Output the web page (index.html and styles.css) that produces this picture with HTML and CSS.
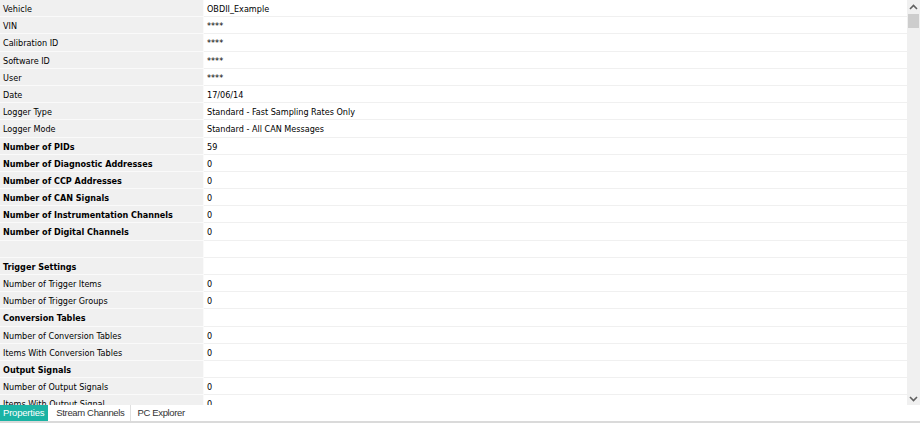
FILE: index.html
```html
<!DOCTYPE html>
<html>
<head>
<meta charset="utf-8">
<link rel="stylesheet" href="styles.css">
</head>
<body>
<div class="app">
  <div class="pane">
    <div class="grid">
      <div class="row"><div class="key">Vehicle</div><div class="val">OBDII_Example</div></div>
      <div class="row"><div class="key">VIN</div><div class="val">****</div></div>
      <div class="row"><div class="key">Calibration ID</div><div class="val">****</div></div>
      <div class="row"><div class="key">Software ID</div><div class="val">****</div></div>
      <div class="row"><div class="key">User</div><div class="val">****</div></div>
      <div class="row"><div class="key">Date</div><div class="val">17/06/14</div></div>
      <div class="row"><div class="key">Logger Type</div><div class="val">Standard - Fast Sampling Rates Only</div></div>
      <div class="row"><div class="key">Logger Mode</div><div class="val">Standard - All CAN Messages</div></div>
      <div class="row"><div class="key b">Number of PIDs</div><div class="val">59</div></div>
      <div class="row"><div class="key b">Number of Diagnostic Addresses</div><div class="val">0</div></div>
      <div class="row"><div class="key b">Number of CCP Addresses</div><div class="val">0</div></div>
      <div class="row"><div class="key b">Number of CAN Signals</div><div class="val">0</div></div>
      <div class="row"><div class="key b">Number of Instrumentation Channels</div><div class="val">0</div></div>
      <div class="row"><div class="key b">Number of Digital Channels</div><div class="val">0</div></div>
      <div class="row"><div class="key"></div><div class="val"></div></div>
      <div class="row"><div class="key b">Trigger Settings</div><div class="val"></div></div>
      <div class="row"><div class="key">Number of Trigger Items</div><div class="val">0</div></div>
      <div class="row"><div class="key">Number of Trigger Groups</div><div class="val">0</div></div>
      <div class="row"><div class="key b">Conversion Tables</div><div class="val"></div></div>
      <div class="row"><div class="key">Number of Conversion Tables</div><div class="val">0</div></div>
      <div class="row"><div class="key">Items With Conversion Tables</div><div class="val">0</div></div>
      <div class="row"><div class="key b">Output Signals</div><div class="val"></div></div>
      <div class="row"><div class="key">Number of Output Signals</div><div class="val">0</div></div>
      <div class="row"><div class="key">Items With Output Signal</div><div class="val">0</div></div>
    </div>
    <div class="scrollbar">
      <div class="arrow">
        <svg width="9" height="6" viewBox="0 0 9 6"><path d="M1 5 L4.5 1.5 L8 5" fill="none" stroke="#606060" stroke-width="1.6"/></svg>
      </div>
      <div class="thumb"></div>
      <div class="track"></div>
      <div class="arrow">
        <svg width="9" height="6" viewBox="0 0 9 6"><path d="M1 1 L4.5 4.5 L8 1" fill="none" stroke="#606060" stroke-width="1.6"/></svg>
      </div>
    </div>
  </div>
  <div class="tabs">
    <div class="tab active">Properties</div>
    <div class="tab">Stream Channels</div>
    <div class="tab last">PC Explorer</div>
  </div>
</div>
</body>
</html>
```

FILE: styles.css
```css
html, body {
  margin: 0;
  padding: 0;
  background: #ffffff;
}
.app {
  width: 920px;
  height: 423px;
  display: flex;
  flex-direction: column;
  font-family: "DejaVu Sans Condensed", "DejaVu Sans", sans-serif;
  font-stretch: condensed;
  font-size: 9px;
  color: #000;
  overflow: hidden;
}
.pane {
  flex: 0 0 405px;
  display: flex;
  overflow: hidden;
}
.grid {
  flex: 1;
  overflow: hidden;
}
.row {
  display: flex;
  height: 17.2px;
  box-sizing: border-box;
}
.key {
  width: 204px;
  flex: 0 0 204px;
  background: #f0f0f0;
  border-bottom: 1px solid #fafafa;
  border-right: 1px solid #fafafa;
  box-sizing: border-box;
  padding-left: 3px;
  padding-top: 2px;
  line-height: 14px;
  white-space: nowrap;
  overflow: hidden;
}
.key.b {
  font-weight: bold;
}
.val {
  flex: 1;
  background: #ffffff;
  border-bottom: 1px solid #f0f0f0;
  box-sizing: border-box;
  padding-left: 3px;
  padding-top: 2px;
  line-height: 14px;
  white-space: nowrap;
}
.scrollbar {
  flex: 0 0 13px;
  background: #f0f0f0;
  display: flex;
  flex-direction: column;
}
.arrow {
  height: 13px;
  display: flex;
  align-items: center;
  justify-content: center;
}
.thumb {
  height: 14px;
  margin: 1px 1px 0 1px;
  background: #cdcdcd;
}
.track {
  flex: 1;
}
.tabs {
  flex: 0 0 16px;
  display: flex;
  border-bottom: 2px solid #dadada;
  background: #ffffff;
  font-family: "Liberation Sans", Arial, sans-serif;
  font-stretch: normal;
  font-size: 9.5px;
}
.tab {
  padding: 0 6px 0 8px;
  line-height: 16px;
  color: #333;
  letter-spacing: -0.35px;
  border-right: 1px solid #e0e0e0;
}
.tab.last {
  padding-left: 6px;
  border-right: none;
}
.tab.active {
  background: #1ab3a4;
  color: #ffffff;
  padding: 0 4px 0 3px;
  letter-spacing: -0.2px;
  border-right: none;
}
```
